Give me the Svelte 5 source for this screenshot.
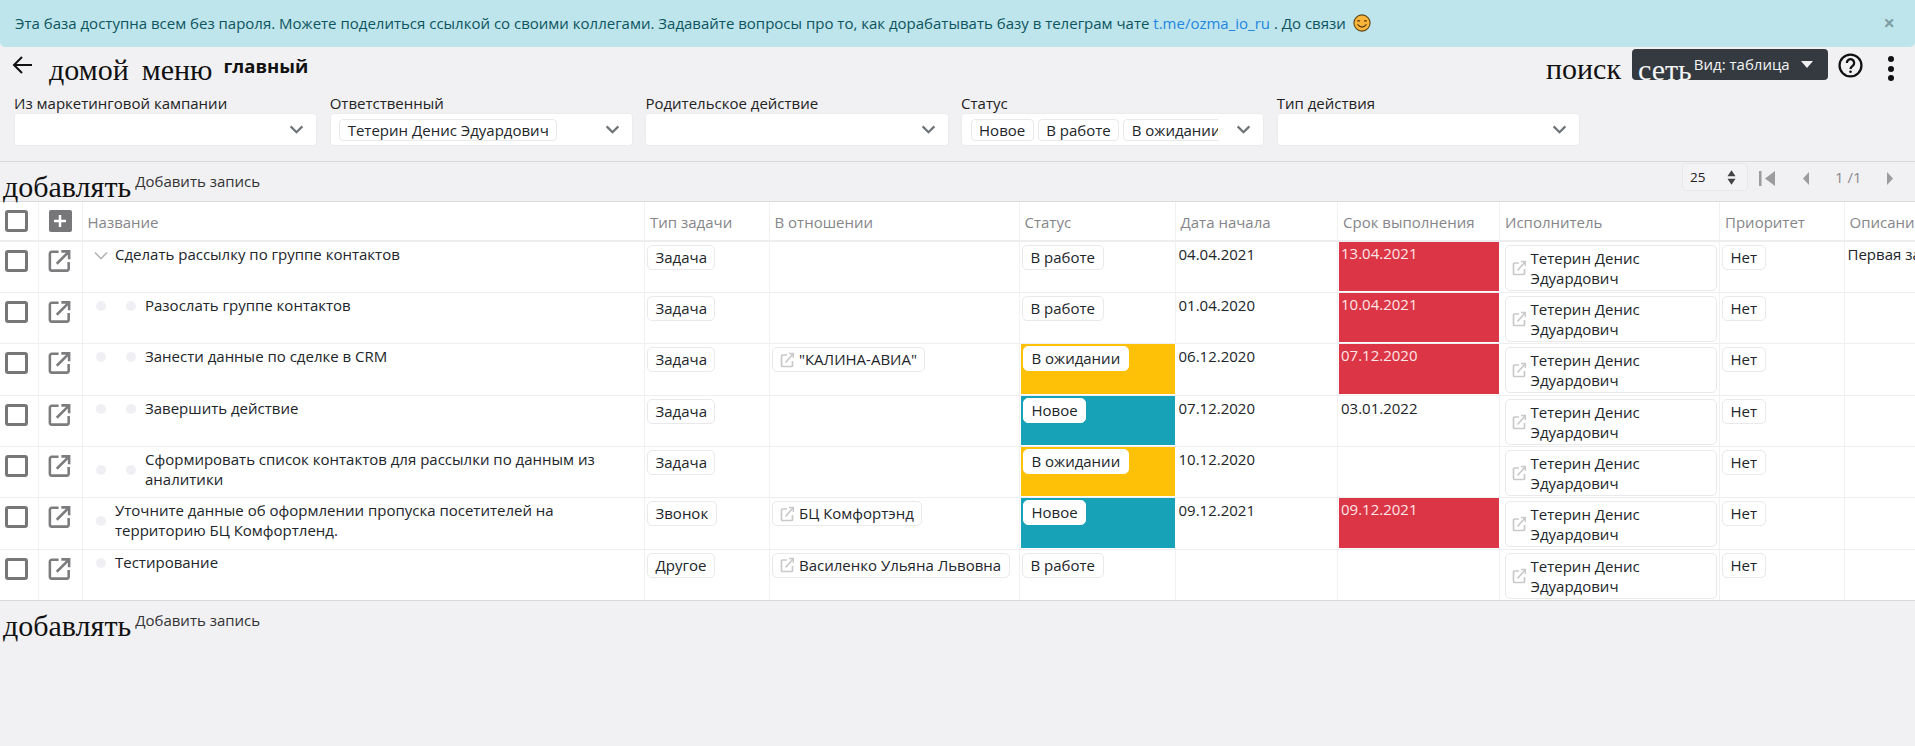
<script>
  const filters = [
    { label: 'Из маркетинговой кампании', chips: [] },
    { label: 'Ответственный', chips: ['Тетерин Денис Эдуардович'] },
    { label: 'Родительское действие', chips: [] },
    { label: 'Статус', chips: ['Новое', 'В работе', 'В ожидании'] },
    { label: 'Тип действия', chips: [] }
  ];
  const heads = ['Название', 'Тип задачи', 'В отношении', 'Статус', 'Дата начала', 'Срок выполнения', 'Исполнитель', 'Приоритет', 'Описание'];
  const rows = [
    { name: 'Сделать рассылку по группе контактов', level: 'expanded', type: 'Задача', rel: '', status: 'В работе', tone: '', start: '04.04.2021', due: '13.04.2021', late: true, desc: 'Первая задача' },
    { name: 'Разослать группе контактов', level: 'child', type: 'Задача', rel: '', status: 'В работе', tone: '', start: '01.04.2020', due: '10.04.2021', late: true },
    { name: 'Занести данные по сделке в CRM', level: 'child', type: 'Задача', rel: '"КАЛИНА-АВИА"', status: 'В ожидании', tone: 'wait', start: '06.12.2020', due: '07.12.2020', late: true },
    { name: 'Завершить действие', level: 'child', type: 'Задача', rel: '', status: 'Новое', tone: 'fresh', start: '07.12.2020', due: '03.01.2022', late: false },
    { name: 'Сформировать список контактов для рассылки по данным из аналитики', level: 'child mid', type: 'Задача', rel: '', status: 'В ожидании', tone: 'wait', start: '10.12.2020', due: '', late: false },
    { name: 'Уточните данные об оформлении пропуска посетителей на территорию БЦ Комфортленд.', level: 'root mid', type: 'Звонок', rel: 'БЦ Комфортэнд', status: 'Новое', tone: 'fresh', start: '09.12.2021', due: '09.12.2021', late: true },
    { name: 'Тестирование', level: 'root', type: 'Другое', rel: 'Василенко Ульяна Львовна', status: 'В работе', tone: '', start: '', due: '', late: false }
  ];
</script>

{#snippet chevron()}
  <svg class="chev" viewBox="0 0 16 10" aria-hidden="true"><path d="M1.5 1.5 8 8l6.500-6.500" /></svg>
{/snippet}

{#snippet linkIcon()}
  <svg class="link" viewBox="0 0 14 16" aria-hidden="true"><path d="M7 3H2.500a1 1 0 0 0-1 1v9.500a1 1 0 0 0 1 1H11.500a1 1 0 0 0 1-1V9M5.500 10.500 13 2M9 1.500h4.500V6" /></svg>
{/snippet}

{#snippet box()}
  <span class="check"></span>
{/snippet}

<div class="page">
  <div class="banner">
    <span>Эта база доступна всем без пароля. Можете поделиться ссылкой со своими коллегами. Задавайте вопросы про то, как дорабатывать базу в телеграм чате <span class="tg">t.me/ozma_io_ru</span> . До связи</span>
    <svg class="smile" viewBox="0 0 20 20" aria-hidden="true">
      <circle cx="10" cy="10" r="9" fill="#fbb63a" stroke="#5c4213" stroke-width="1.200" />
      <path d="M4.800 8.200q1.400-1.800 2.800 0M12.400 8.200q1.400-1.800 2.800 0M5 11.500q5 6 10 0" fill="none" stroke="#5c3a10" stroke-width="1.300" />
    </svg>
    <span class="close">×</span>
  </div>

  <div class="topbar">
    <svg class="back" viewBox="0 0 20 18" aria-hidden="true"><path d="M20 9H2M10 1 2 9l8 8" /></svg>
    <span class="glyph home">домой</span>
    <span class="glyph menu">меню</span>
    <b class="title">главный</b>
    <span class="glyph search">поиск</span>
    <div class="view">
      <span class="glyph grid">сеть</span>
      <span class="view-text">Вид: таблица</span>
      <span class="tri"></span>
    </div>
    <svg class="help" viewBox="0 0 24 24" aria-hidden="true">
      <circle cx="12" cy="12" r="10.500" />
      <path d="M8.500 9.500a3.500 3.500 0 1 1 5.600 2.800c-1.300 1-2.100 1.600-2.100 3" />
      <circle class="dot" cx="12" cy="18" r="1.300" />
    </svg>
    <div class="more"><i></i><i></i><i></i></div>
  </div>

  <div class="filters">
    {#each filters as f}
      <div class="filter">
        <div class="f-label">{f.label}</div>
        <div class="f-box">
          <div class="f-chips">
            {#each f.chips as c}<span class="chip">{c}</span>{/each}
          </div>
          {@render chevron()}
        </div>
      </div>
    {/each}
  </div>

  <div class="addrow top">
    <span class="glyph add">добавлять</span>
    <span class="addtext">Добавить запись</span>
    <div class="pager">
      <div class="psize"><span>25</span><svg viewBox="0 0 10 16" aria-hidden="true"><path d="M5 0l4.500 6.500h-9zM5 16l4.500-6.500h-9z" /></svg></div>
      <svg class="pg first" viewBox="0 0 16 15" aria-hidden="true"><path d="M0 0h2.500v15H0zM16 0v15L6 7.500z" /></svg>
      <svg class="pg prev" viewBox="0 0 7 15" aria-hidden="true"><path d="M7 0v15L0 7.500z" /></svg>
      <span class="pnum">1 /1</span>
      <svg class="pg next" viewBox="0 0 7 15" aria-hidden="true"><path d="M0 0v15l7-7.500z" /></svg>
    </div>
  </div>

  <div class="table">
    <div class="tr head">
      <div class="td c-check">{@render box()}</div>
      <div class="td c-open">
        <span class="plus"><svg viewBox="0 0 12 12" aria-hidden="true"><path d="M6 0v12M0 6h12" /></svg></span>
      </div>
      {#each heads as h}<div class="td th">{h}</div>{/each}
    </div>
    {#each rows as r}
      <div class="tr body">
        <div class="td c-check">{@render box()}</div>
        <div class="td c-open">
          <svg class="ext" viewBox="0 0 24 24" aria-hidden="true"><path d="M11 2H3.500a2 2 0 0 0-2 2v16.500a2 2 0 0 0 2 2H20a2 2 0 0 0 2-2V13M9 15 22 2M14 1.500h8.500V10" /></svg>
        </div>
        <div class="td name {r.level}">
          {#if r.level === 'expanded'}
            <svg class="tree" viewBox="0 0 16 10" aria-hidden="true"><path d="M1 1.500 8 8.500l7-7" /></svg>
          {:else}
            <i class="bullet one"></i>
            {#if r.level.includes('child')}<i class="bullet two"></i>{/if}
          {/if}
          <span class="name-text">{r.name}</span>
        </div>
        <div class="td"><span class="chip cell">{r.type}</span></div>
        <div class="td">
          {#if r.rel}<span class="chip cell rel">{@render linkIcon()}{r.rel}</span>{/if}
        </div>
        <div class="td status {r.tone}"><span class="chip cell">{r.status}</span></div>
        <div class="td date">{r.start}</div>
        <div class="td date due" class:late={r.late}>{r.due}</div>
        <div class="td"><span class="chip person">{@render linkIcon()}<span>Тетерин Денис Эдуардович</span></span></div>
        <div class="td"><span class="chip cell">Нет</span></div>
        <div class="td date">{r.desc ?? ''}</div>
      </div>
    {/each}
  </div>

  <div class="addrow bottom">
    <span class="glyph add">добавлять</span>
    <span class="addtext">Добавить запись</span>
  </div>
</div>

<style>
  :global(body) { margin: 0; background: #f1f1f4; }
  .page {
    width: 1915px; height: 746px; overflow: hidden; background: #f1f1f4;
    font-family: "Open Sans", "Noto Sans", sans-serif; font-size: 15px; color: #212529;
  }
  .banner {
    height: 47px; box-sizing: border-box; padding: 0 0 2px 15px; display: flex; align-items: center;
    background: #bee5eb; color: #0c5460; border-radius: 0 0 5px 5px; position: relative; white-space: nowrap;
  }
  .tg { color: #1e86e0; }
  .smile { width: 18px; height: 18px; margin-left: 7px; }
  .close { margin-left: auto; margin-right: 20px; font-size: 20px; font-weight: 700; color: #7f9ea4; line-height: 1; }

  .topbar { height: 46px; display: flex; align-items: flex-start; position: relative; }
  .glyph { font-family: "Liberation Serif", serif; font-size: 30px; line-height: 34px; color: #111; white-space: nowrap; }
  .back { width: 20px; height: 18px; margin: 9px 0 0 12px; fill: none; stroke: #111; stroke-width: 2; }
  .home { margin: 6px 0 0 17px; }
  .menu { margin: 6px 0 0 13px; }
  .title { margin: 7px 0 0 11px; font-size: 18.500px; line-height: 24px; color: #111; }
  .search { margin: 5px 0 0 auto; }
  .view {
    width: 196px; height: 31px; margin: 2px 0 0 11px; flex: none; background: #343a40; border-radius: 4px;
    display: flex; align-items: flex-start; color: #f4f5f6;
  }
  .view .glyph { color: #f4f5f6; margin: 4px 0 0 6px; }
  .view-text { margin: 5px 0 0 2px; line-height: 20px; white-space: nowrap; }
  .tri { margin: 12px 0 0 11px; border: 6.500px solid transparent; border-top: 7px solid #f1f1f1; border-bottom: 0; }
  .help { width: 25px; height: 25px; margin: 6px 0 0 10px; flex: none; fill: none; stroke: #111; stroke-width: 2.200; }
  .help .dot { fill: #111; stroke: none; }
  .more { margin: 9px 21px 0 27px; display: flex; flex-direction: column; gap: 3.500px; }
  .more i { width: 6px; height: 6px; margin-left: -2px; border-radius: 50%; background: #111; }

  .filters { display: grid; grid-template-columns: repeat(6, 315.700px); padding: 0 0 0 7.500px; height: 68px; border-bottom: 1px solid #d9d9dc; }
  .filter { padding: 0 7px 0 7.500px; }
  .f-label { height: 21px; line-height: 20px; color: #222; white-space: nowrap; margin-left: -1px; }
  .f-box {
    height: 31px; box-sizing: border-box; background: #fff; border-radius: 3px; box-shadow: 0 0 2px rgba(0, 0, 0, .08);
    display: flex; align-items: center; padding: 0 12px 0 8.500px;
  }
  .f-chips { flex: 1; min-width: 0; display: flex; gap: 4px; overflow: hidden; }
  .chev { width: 15px; height: 9px; flex: none; margin-left: 18px; fill: none; stroke: #6f7478; stroke-width: 2.500; }
  .chip {
    display: inline-block; flex: none; height: 22px; line-height: 20px; box-sizing: border-box; padding: 0 7.500px;
    background: #fff; border: 1px solid #e9e9ec; border-radius: 4px; color: #212529; white-space: nowrap;
  }

  .addrow { display: flex; align-items: flex-start; padding-left: 3px; }
  .addrow.top { height: 39px; }
  .add { margin-top: 8px; }
  .addrow .addtext { margin: 9px 0 0 4px; line-height: 20px; color: #333; white-space: nowrap; }
  .pager { margin-left: auto; display: flex; align-items: center; height: 28px; margin-top: 1px; }
  .psize {
    width: 66px; height: 28px; box-sizing: border-box; padding: 0 11px 0 7px; display: flex; align-items: center; justify-content: space-between;
    background: #f3f3f6; border: 1px solid #e8e8eb; border-radius: 4px; font-size: 13.500px; color: #222;
  }
  .psize svg { width: 9px; height: 15px; fill: #444; }
  .pg { height: 15px; fill: #9c9c9f; flex: none; margin-top: 2px; }
  .first { width: 16px; margin-left: 11px; }
  .prev { width: 6px; margin-left: 28px; }
  .pnum { margin: 0 0 0 26px; color: #8a8a8d; width: 24px; white-space: nowrap; }
  .next { width: 6px; margin-left: 28px; margin-right: 22px; }

  .table { border-top: 1px solid #dcdcdf; border-bottom: 1px solid #d9d9dc; background: #fff; overflow: hidden; }
  .tr { display: grid; grid-template-columns: 39px 43.500px 562.500px 124.500px 250px 156px 162.500px 162px 220px 124.500px 300px; }
  .tr.head { height: 39.670px; border-bottom: 2px solid #ededf0; box-sizing: border-box; }
  .tr.body { height: 51.330px; box-sizing: border-box; border-bottom: 1px solid #eeeef1; }
  .tr.body:last-child { border-bottom: 0; height: 50.800px; }
  .td { border-right: 1px solid #f1f1f4; box-sizing: border-box; padding: 3px 2px 0; position: relative; line-height: 20px; min-width: 0; }
  .td:last-child { border-right: 0; }
  .th { color: #85858a; padding: 10px 5px 0; white-space: nowrap; }
  .c-check, .c-open { padding: 0; }
  .head .c-check, .head .c-open { padding-top: 8px; }
  .body .c-check, .body .c-open { padding-top: 8px; }
  .check { display: block; width: 23px; height: 22px; margin-left: 5px; box-sizing: border-box; border: 3px solid #777; border-radius: 3px; }
  .plus { display: flex; width: 23px; height: 22px; margin-left: 9.500px; background: #77777a; border-radius: 2px; align-items: center; justify-content: center; }
  .plus svg { width: 12px; height: 12px; fill: none; stroke: #fff; stroke-width: 2.500; }
  .ext { display: block; width: 23px; height: 22px; margin-left: 9px; fill: none; stroke: #7c7c7f; stroke-width: 2.800; }

  .name { padding: 2px 18px 0 32.500px; }
  .name.child { padding-left: 62.500px; }
  .name.mid .bullet { top: 18px; }
  .tree { position: absolute; left: 11px; top: 9px; width: 14px; height: 9px; fill: none; stroke: #b5b5b8; stroke-width: 1.800; }
  .bullet { position: absolute; top: 8px; width: 10px; height: 10px; border-radius: 50%; background: #f0f0f4; }
  .bullet.one { left: 13px; }
  .bullet.two { left: 43px; }

  .chip.cell { height: 25px; line-height: 23px; border-radius: 5px; }
  .status { padding-left: 2.500px; }
  .status.wait, .status.fresh { border: 1px solid #fff; border-width: 0 1px 1px 1px; padding-top: 2px; }
  .status.wait { background: #ffc107; }
  .status.fresh { background: #17a2b8; }
  .status.wait .chip, .status.fresh .chip { border-color: #fff; }
  .rel { display: inline-flex; align-items: center; }
  .link { width: 14px; height: 16px; flex: none; margin-right: 5px; fill: none; stroke: #c9c9cc; stroke-width: 1.700; }
  .date { padding: 2px 3px 0; white-space: nowrap; overflow: hidden; }
  .due.late { background: #dc3545; color: #fbe6e8; border: 1px solid #fff; border-width: 0 1px 1px 1px; padding: 1px 2px 0; }
  .chip.person {
    display: flex; align-items: center; height: 46px; width: 212px; white-space: normal; margin-left: 2.500px;
    line-height: 20px; padding: 0 8px 0 6px; border-radius: 5px;
  }
  .addrow.bottom { height: 60px; }
</style>
